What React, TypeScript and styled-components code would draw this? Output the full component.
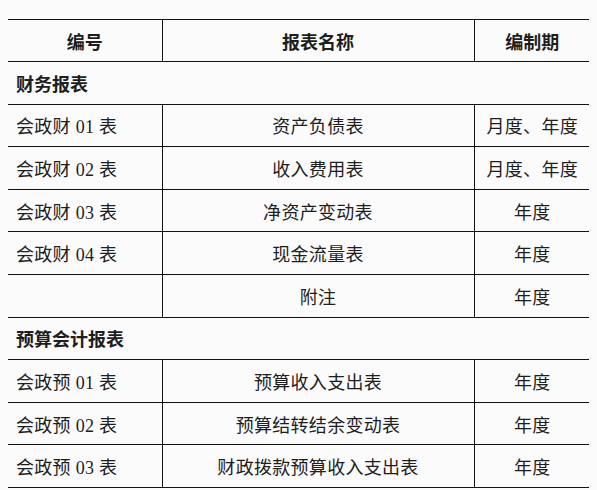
import { Fragment } from "react";
import styled, { createGlobalStyle } from "styled-components";

const GlobalStyle = createGlobalStyle`
  body {
    margin: 8px;
    background: #fbfbfb;
    color: #1e1e1e;
    font-family: "Liberation Serif", "Noto Sans CJK SC", serif;
  }
`;

const Table = styled.table`
  margin-top: 11px;
  width: 582px;
  border-collapse: collapse;
  table-layout: fixed;
  font-size: 18px;
`;

const Row = styled.tr<{ $h?: number }>`
  height: ${({ $h }) => $h ?? 42.6}px;
  border-top: 1px solid #111;
  border-bottom: 1px solid #111;
`;

const HeadCell = styled.th`
  font-family: "Noto Sans CJK SC", sans-serif;
  font-weight: 700;
  font-size: 18px;
  text-align: center;
  padding: 0 8px;
  & + & {
    border-left: 1px solid #111;
  }
`;

const SectionCell = styled.td`
  font-family: "Noto Sans CJK SC", sans-serif;
  font-weight: 700;
  font-size: 18px;
  text-align: left;
  padding: 0 8px;
`;

const Cell = styled.td<{ $align?: "left" | "center" }>`
  text-align: ${({ $align }) => $align ?? "center"};
  padding: 0 8px;
  white-space: nowrap;
  letter-spacing: 0.3px;
  & + & {
    border-left: 1px solid #111;
  }
`;

type Item = { code: string; name: string; period: string };

const sections: { title: string; items: Item[] }[] = [
  {
    title: "财务报表",
    items: [
      { code: "会政财 01 表", name: "资产负债表", period: "月度、年度" },
      { code: "会政财 02 表", name: "收入费用表", period: "月度、年度" },
      { code: "会政财 03 表", name: "净资产变动表", period: "年度" },
      { code: "会政财 04 表", name: "现金流量表", period: "年度" },
      { code: "", name: "附注", period: "年度" },
    ],
  },
  {
    title: "预算会计报表",
    items: [
      { code: "会政预 01 表", name: "预算收入支出表", period: "年度" },
      { code: "会政预 02 表", name: "预算结转结余变动表", period: "年度" },
      { code: "会政预 03 表", name: "财政拨款预算收入支出表", period: "年度" },
    ],
  },
];

export default function App() {
  return (
    <>
      <GlobalStyle />
      <Table>
        <colgroup>
          <col style={{ width: 154 }} />
          <col style={{ width: 312 }} />
          <col style={{ width: 116 }} />
        </colgroup>
        <thead>
          <Row $h={42}>
            <HeadCell>编号</HeadCell>
            <HeadCell>报表名称</HeadCell>
            <HeadCell>编制期</HeadCell>
          </Row>
        </thead>
        <tbody>
          {sections.map((s) => (
            <Fragment key={s.title}>
              <Row>
                <SectionCell colSpan={3}>{s.title}</SectionCell>
              </Row>
              {s.items.map((it) => (
                <Row key={it.name}>
                  <Cell $align="left">{it.code}</Cell>
                  <Cell>{it.name}</Cell>
                  <Cell>{it.period}</Cell>
                </Row>
              ))}
            </Fragment>
          ))}
        </tbody>
      </Table>
    </>
  );
}
